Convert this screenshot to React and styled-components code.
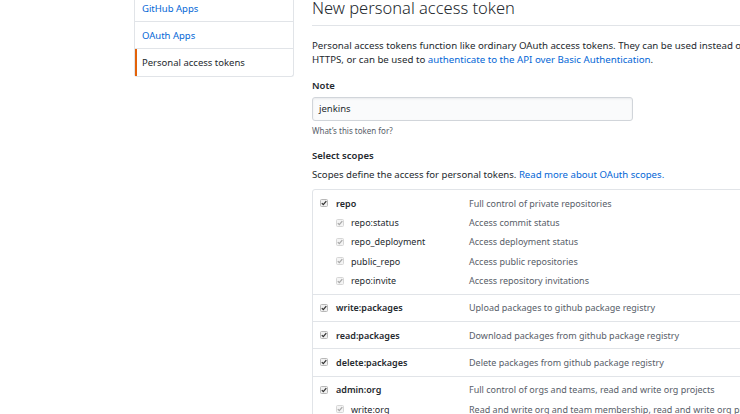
import React from "react";
import styled, { createGlobalStyle } from "styled-components";

const Global = createGlobalStyle`
  html, body { margin: 0; padding: 0; background: #fff; overflow: hidden; }
  body { font-family: "Noto Sans", "Open Sans", sans-serif; color: #24292e; }
  * { box-sizing: border-box; }
`;

const Page = styled.div`
  display: flex;
  align-items: flex-start;
  gap: 18px;
  margin-top: -6px;
  padding-left: 134px;
  width: 1100px;
  height: 430px;
`;

const Sidebar = styled.nav`
  flex: none;
  width: 160px;
  margin-top: 1px;
  border: 1px solid #e1e4e8;
  border-top: none;
  border-radius: 0 0 3px 3px;
  display: flex;
  flex-direction: column;
`;

const SideItem = styled.a`
  display: block;
  height: 27px;
  line-height: 28px;
  padding-left: ${(p) => (p.$active ? "5px" : "7px")};
  font-size: 9.5px;
  color: ${(p) => (p.$active ? "#24292e" : "#0366d6")};
  border-bottom: ${(p) => (p.$last ? "none" : "1px solid #e1e4e8")};
  border-left: ${(p) => (p.$active ? "2px solid #e36209" : "none")};
  text-decoration: none;
`;

const Main = styled.main`
  flex: none;
  width: 600px;
  display: flex;
  flex-direction: column;
`;

const Heading = styled.h2`
  margin: 0;
  font-size: 16.5px;
  font-weight: 300;
  line-height: 28px;
  border-bottom: 1px solid #e1e4e8;
  height: 32px;
`;

const Para = styled.p`
  margin: 13px 0 0;
  font-size: 9.7px;
  line-height: 14px;
  color: #24292e;
  white-space: nowrap;
`;

const Link = styled.a`
  color: #0366d6;
  text-decoration: none;
`;

const Label = styled.div`
  margin-top: ${(p) => p.$mt || 0}px;
  font-size: 9.5px;
  font-weight: 600;
  line-height: 14px;
`;

const Input = styled.div`
  margin-top: 4px;
  width: 321px;
  height: 24px;
  border: 1px solid #d1d5da;
  border-radius: 3px;
  background: #fafbfc;
  box-shadow: inset 0 1px 2px rgba(27, 31, 35, 0.075);
  font-size: 9.5px;
  line-height: 22px;
  padding-left: 6px;
`;

const Note = styled.div`
  margin-top: 4px;
  font-size: 8px;
  line-height: 12px;
  color: #586069;
`;

const Text = styled.div`
  margin-top: ${(p) => p.$mt || 0}px;
  font-size: 9.6px;
  line-height: 14px;
`;

const ScopeBox = styled.div`
  margin-top: 7px;
  border: 1px solid #e1e4e8;
  border-radius: 3px;
`;

const Group = styled.div`
  padding: 3.45px 0;
  border-bottom: 1px solid #e1e4e8;
  &:last-child { border-bottom: none; }
`;

const Line = styled.div`
  display: flex;
  align-items: center;
  height: 19.4px;
  font-size: 9px;
`;

const NameCell = styled.div`
  flex: none;
  width: 156px;
  display: flex;
  align-items: center;
  gap: ${(p) => (p.$child ? 7 : 8)}px;
  padding-left: ${(p) => (p.$child ? 23 : 7)}px;
  font-weight: ${(p) => (p.$child ? 400 : 600)};
  color: #24292e;
`;

const Desc = styled.div`
  color: #586069;
  white-space: nowrap;
`;

const Box = styled.svg`
  flex: none;
  display: block;
`;

function Check({ disabled }) {
  return (
    <Box width="8" height="8" viewBox="0 0 8 8">
      <rect x="0.5" y="0.5" width="7" height="7" rx="1" fill={disabled ? "#f4f4f4" : "#f0f0f0"} stroke={disabled ? "#d6d6d6" : "#b8b8b8"} />
      <path d="M1.8 4.1 L3.3 5.6 L6.3 2.1" fill="none" stroke={disabled ? "#a8a8a8" : "#333"} strokeWidth="1.3" />
    </Box>
  );
}

const groups = [
  {
    name: "repo",
    desc: "Full control of private repositories",
    children: [
      ["repo:status", "Access commit status"],
      ["repo_deployment", "Access deployment status"],
      ["public_repo", "Access public repositories"],
      ["repo:invite", "Access repository invitations"],
    ],
  },
  { name: "write:packages", desc: "Upload packages to github package registry", children: [] },
  { name: "read:packages", desc: "Download packages from github package registry", children: [] },
  { name: "delete:packages", desc: "Delete packages from github package registry", children: [] },
  {
    name: "admin:org",
    desc: "Full control of orgs and teams, read and write org projects",
    children: [
      ["write:org", "Read and write org and team membership, read and write org projects"],
      ["read:org", "Read org and team membership, read org projects"],
    ],
  },
];

export default function App() {
  return (
    <>
      <Global />
      <Page>
        <Sidebar>
          <SideItem href="#">GitHub Apps</SideItem>
          <SideItem href="#">OAuth Apps</SideItem>
          <SideItem href="#" $active $last>Personal access tokens</SideItem>
        </Sidebar>
        <Main>
          <Heading>New personal access token</Heading>
          <Para>
            Personal access tokens function like ordinary OAuth access tokens. They can be used instead of a password for Git over
            <br />
            HTTPS, or can be used to <Link href="#">authenticate to the API over Basic Authentication</Link>.
          </Para>
          <Label $mt={12}>Note</Label>
          <Input>jenkins</Input>
          <Note>What’s this token for?</Note>
          <Label $mt={12}>Select scopes</Label>
          <Text $mt={5}>
            Scopes define the access for personal tokens. <Link href="#">Read more about OAuth scopes.</Link>
          </Text>
          <ScopeBox>
            {groups.map((g) => (
              <Group key={g.name}>
                <Line>
                  <NameCell>
                    <Check />
                    {g.name}
                  </NameCell>
                  <Desc>{g.desc}</Desc>
                </Line>
                {g.children.map(([n, d]) => (
                  <Line key={n}>
                    <NameCell $child>
                      <Check disabled />
                      {n}
                    </NameCell>
                    <Desc>{d}</Desc>
                  </Line>
                ))}
              </Group>
            ))}
          </ScopeBox>
        </Main>
      </Page>
    </>
  );
}
